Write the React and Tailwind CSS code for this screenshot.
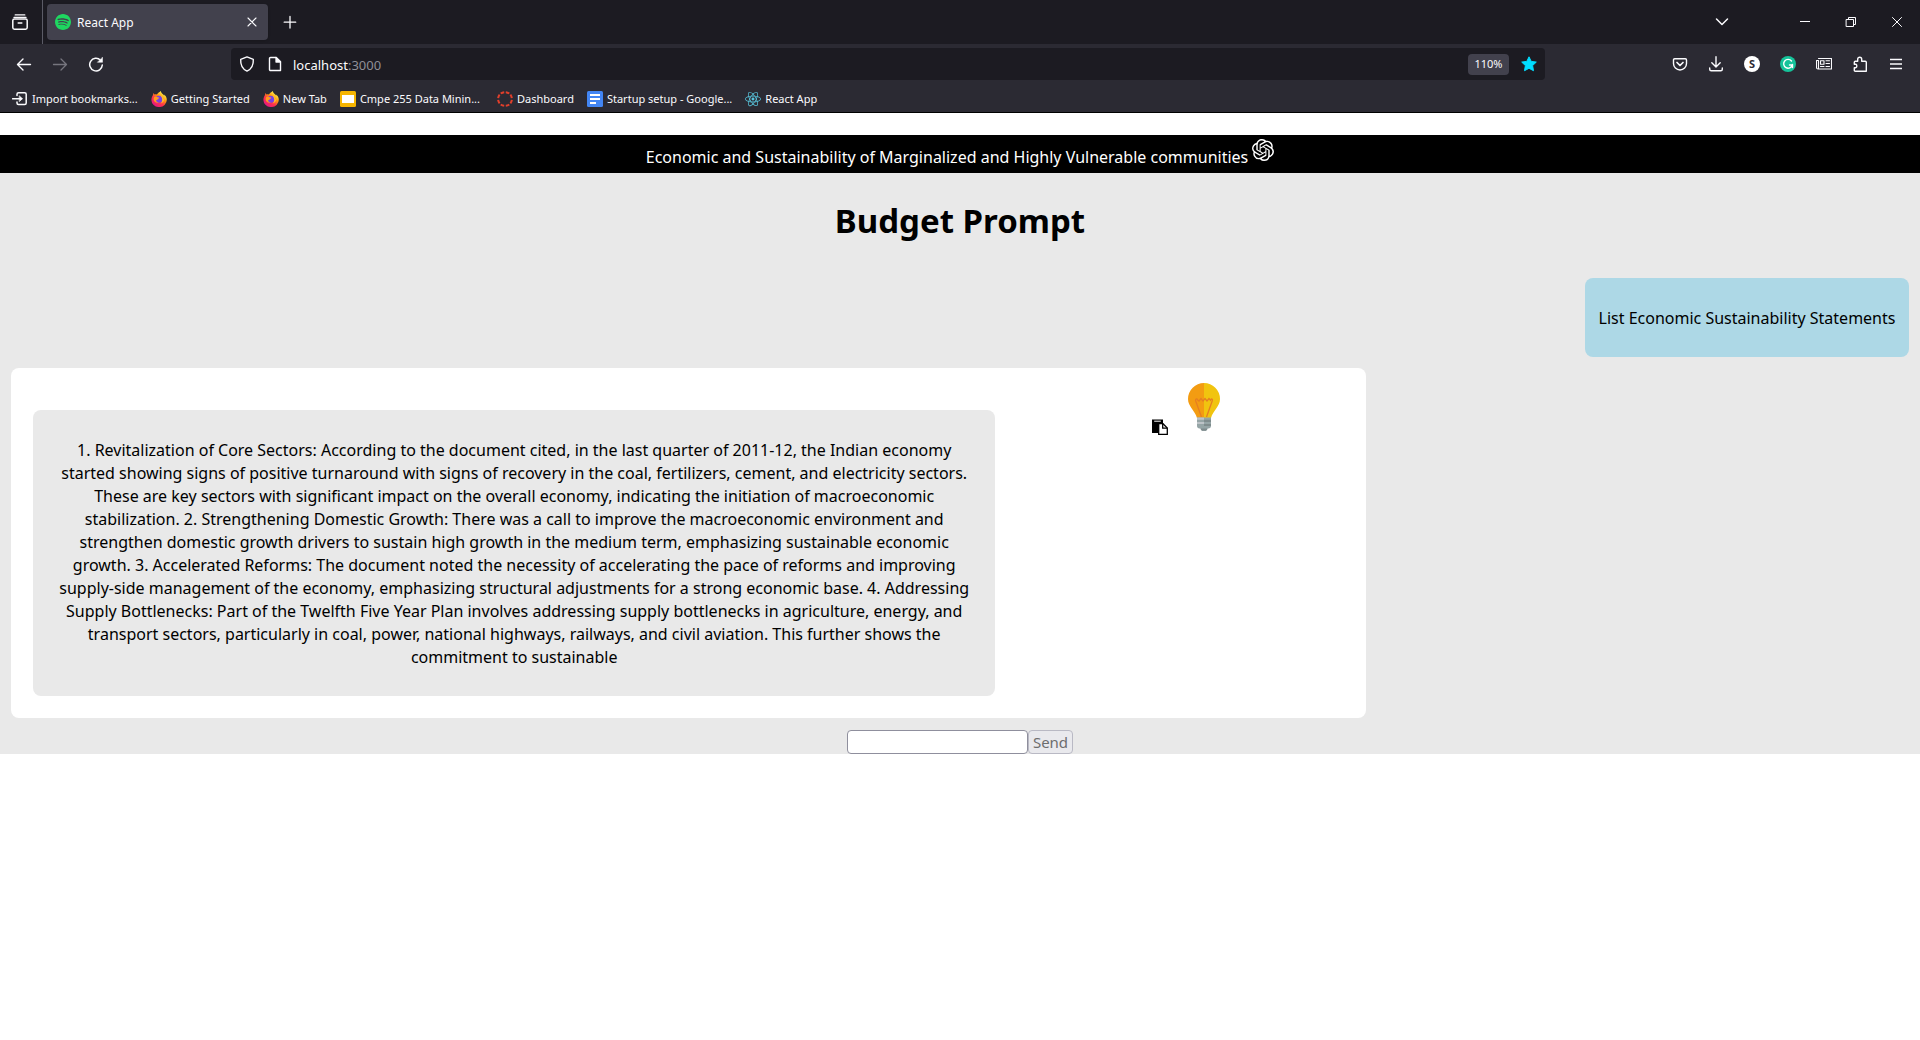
import React from "react";
import { SiOpenai, SiSpotify, SiReact } from "react-icons/si";

const stroke = {
  fill: "none",
  stroke: "currentColor",
  strokeWidth: 1.3,
  strokeLinecap: "round",
  strokeLinejoin: "round",
};

function Icon({ children, className = "size-4", ...rest }) {
  return (
    <svg viewBox="0 0 16 16" className={className} aria-hidden="true" {...stroke} {...rest}>
      {children}
    </svg>
  );
}

function IconButton({ label, className = "", children }) {
  return (
    <button type="button" aria-label={label} className={"flex h-9 w-9 shrink-0 items-center justify-center " + className}>
      {children}
    </button>
  );
}

function TabsBoxIcon() {
  return (
    <Icon>
      <path d="M3.2 0.9h9.6M2 3.4h12" />
      <rect x="0.8" y="5" width="14.4" height="10.2" rx="1.6" strokeWidth="1.5" />
      <path d="M6.2 9h3.6" strokeWidth="1.5" />
    </Icon>
  );
}

function Firefox({ id }) {
  return (
    <svg viewBox="0 0 16 16" className="size-4 shrink-0" aria-hidden="true">
      <defs>
        <linearGradient id={id} x1="0.85" y1="0.1" x2="0.2" y2="0.95">
          <stop offset="0.05" stopColor="#fff44f" />
          <stop offset="0.35" stopColor="#ff980e" />
          <stop offset="0.62" stopColor="#ff3647" />
          <stop offset="1" stopColor="#e31587" />
        </linearGradient>
      </defs>
      <path
        fill={`url(#${id})`}
        d="M9.9 0c.1 1.3.9 2.3 1.8 3.1.9.6 1.3 1.2 1.6 1.8 0-.5-.2-1-.4-1.4 1.9 1.200 2.900 3.300 2.900 5.300A7.700 7.200 0 0 1 .4 8.900c0-2.100.8-3.800 1.600-5L2.300 2l1.200 1.500c.9-.3 1.700-.2 2.300.1C6.500 2.400 8 1.200 9.900 0z"
      />
      <circle cx="7.900" cy="8.300" r="3.500" fill="#7542e5" />
      <path fill="#ff9a1f" d="M3 6.200c1.400-.9 2.700-.7 3.600.1.700.1 1.500.1 1.700.4-.2.800-1.500 1-1.800 1.700-.2.900-.9.800-1.500.6 0 1.500 1.300 2.500 2.800 2.500-2.500.8-5.200-.8-5.200-3.500z" />
      <path fill="#ffbd2f" d="M9.400 4.500c2 .6 3 2.200 2.800 4 .7-.4.900-1.200.8-2C14 9 12.300 12 9.300 12.400c2.200-.9 3.100-4.600.1-7.900z" />
    </svg>
  );
}

function CanvasRing() {
  return (
    <svg viewBox="0 0 16 16" className="size-4 shrink-0" aria-hidden="true">
      <circle cx="8" cy="8" r="6.900" fill="none" stroke="#e13f2b" strokeWidth="2" pathLength="80" strokeDasharray="7 3" strokeDashoffset="-1.500" />
    </svg>
  );
}

function Slides() {
  return (
    <svg viewBox="0 0 16 16" className="size-4 shrink-0" aria-hidden="true">
      <rect width="16" height="16" rx="1.500" fill="#f5b400" />
      <rect x="2" y="4" width="12" height="8" fill="#fff" />
    </svg>
  );
}

function Docs() {
  return (
    <svg viewBox="0 0 16 16" className="size-4 shrink-0" aria-hidden="true">
      <rect width="16" height="16" rx="1.500" fill="#4285f4" />
      <path d="M3 4h10M3 8h10M3 12h6" stroke="#fff" strokeWidth="2" />
    </svg>
  );
}

function ImportIcon() {
  return (
    <Icon className="h-4 w-4 shrink-0">
      <path d="M5 4.500V3.300c0-.9.600-1.500 1.500-1.500h6.200c.9 0 1.500.6 1.500 1.500v8.600c0 .9-.6 1.500-1.500 1.500H6.500c-.9 0-1.500-.6-1.500-1.500V11" strokeWidth="1.500" />
      <path d="M.6 7.700h9" strokeWidth="1.500" />
      <path d="M7.500 5l3 2.700-3 2.700z" fill="currentColor" strokeWidth="0.600" />
    </Icon>
  );
}

function Bulb() {
  return (
    <svg viewBox="0 0 32 48" className="h-12 w-8" aria-hidden="true">
      <path d="M16 0a16 16 0 0 0-16 16c0 7.500 7 11.500 9 19h7z" fill="#f39c12" />
      <path d="M16 0a16 16 0 0 1 16 16c0 7.500-7 11.500-9 19h-7z" fill="#f1c40f" />
      <path d="M13.500 34L7.500 17.500c0-2 1.500-2 2.200-.5l1.300 1 2-2.500 2 2.500 2-2.500 2 2.500 2-2.500 1.500 1.700c1-2.200 2.500-1.200 1.700.8L18.500 34" fill="none" stroke="#e67e22" strokeWidth="1.300" />
      <path d="M9 34.500h14V43c0 1.500-1 2.500-2.500 2.500h-1.300L18 47.800h-4l-1.200-2.300h-1.300C10 45.500 9 44.500 9 43z" fill="#95a5a6" />
      <path d="M9 34.500h7v2.300H9zM9 39h7v2H9z" fill="#bdc3c7" />
      <path d="M16 36.800h7V39h-7zM16 41h7v2h-7zM12 45.500h8l-1.800 2.300h-4.400z" fill="#7f8c8d" />
    </svg>
  );
}

function PasteIcon() {
  return (
    <svg viewBox="0 0 16 16" className="size-4" aria-hidden="true">
      <path d="M0 0.500h11V5H7v9H0z" fill="#000" />
      <path d="M2.200 2.200h6.600" stroke="#fff" />
      <path d="M6.700 4.700h4.300l4.300 4.300v6.300H6.700z" fill="#fff" stroke="#000" strokeWidth="1.300" />
      <path d="M10.700 4.700v4.500h4.500" fill="none" stroke="#000" strokeWidth="1.300" />
    </svg>
  );
}

function TabStrip() {
  return (
    <div className="flex h-11 items-center bg-[#1c1b22]">
      <div className="flex h-11 w-[43px] items-center justify-center border-r border-[#5b5b66] pr-0.5">
        <button type="button" aria-label="View recent browsing"><TabsBoxIcon /></button>
      </div>
      <div className="ml-1 flex h-9 w-[221px] items-center rounded bg-[#42414d] pr-2 pl-2 shadow">
        <SiSpotify className="size-4 text-[#1ed760]" />
        <span className="ml-1.5 flex-1 pt-0.5 text-xs">React App</span>
        <button type="button" aria-label="Close tab" className="flex size-4 items-center justify-center">
          <Icon strokeWidth="1.100"><path d="M4 4l8 8M12 4l-8 8" /></Icon>
        </button>
      </div>
      <button type="button" aria-label="New tab" className="ml-3.5 flex size-4 items-center justify-center">
        <Icon><path d="M8 2.500v11.500M2.200 8.200h11.500" /></Icon>
      </button>
      <div className="ml-auto flex items-center">
        <IconButton label="List all tabs" className="mr-[42px]">
          <Icon strokeWidth="1.500"><path d="M2.500 5L8 10.500 13.500 5" /></Icon>
        </IconButton>
        <button type="button" aria-label="Minimize" className="flex h-11 w-[46px] items-center justify-center">
          <Icon strokeWidth="1" strokeLinecap="butt"><path d="M3 7.500h10" /></Icon>
        </button>
        <button type="button" aria-label="Restore" className="flex h-11 w-[46px] items-center justify-center">
          <Icon strokeWidth="1"><path d="M3.500 5.500h7v7h-7zM5.500 5.500v-2h7v7h-2" /></Icon>
        </button>
        <button type="button" aria-label="Close" className="flex h-11 w-[46px] items-center justify-center">
          <Icon strokeWidth="1"><path d="M3.500 3.500l9 9M12.500 3.500l-9 9" /></Icon>
        </button>
      </div>
    </div>
  );
}

function Toolbar() {
  return (
    <div className="flex h-10 items-center px-1.5">
      <div className="flex w-[225px]">
        <IconButton label="Back"><Icon strokeWidth="1.400"><path d="M14.500 8.500H1.500M7 3L1.500 8.500 7 14" /></Icon></IconButton>
        <IconButton label="Forward" className="text-[#76757e]"><Icon><path d="M1.500 8.500h13M9 3l5.500 5.500L9 14" /></Icon></IconButton>
        <IconButton label="Reload">
          <Icon strokeWidth="1.500"><path d="M14.300 9A6.300 6.300 0 1 1 12.500 4.200" /><path d="M14.500 1.500v4.800H9.700z" fill="currentColor" strokeWidth="0.500" /></Icon>
        </IconButton>
      </div>
      <div className="flex h-8 w-[1314px] shrink items-center rounded bg-[#1c1b22] pr-2 pl-2">
        <Icon><path d="M8 .9l6.300 2.500c.3 5-1.500 9.600-6.300 11.700C3.200 13 1.400 8.400 1.700 3.400z" strokeWidth="1.400" /></Icon>
        <Icon className="ml-3 size-4"><path d="M3.500 1.500h5.700l4.300 4.300v8.700h-10a1 1 0 0 1-1-1v-11a1 1 0 0 1 1-1z" strokeWidth="1.400" /><path d="M9 1.500v4.500h4.500z" fill="currentColor" /></Icon>
        <div className="relative ml-2.5 h-6 flex-1 text-[13px] leading-[26px]">
          <span aria-hidden="true">localhost<span className="text-[#8f8f96]">:3000</span></span>
          <input aria-label="Address" defaultValue="localhost:3000" className="absolute inset-0 w-full bg-transparent text-transparent outline-none" />
        </div>
        <button type="button" className="h-[21px] w-[41px] rounded-sm bg-[#42414d] text-[11px]">110%</button>
        <button type="button" aria-label="Edit bookmark" className="ml-3">
          <svg viewBox="0 0 16 16" className="size-4" aria-hidden="true"><path fill="#00ddff" stroke="#00ddff" strokeLinejoin="round" d="M8 .8l2.200 4.600 5.100.7-3.700 3.500.9 5.100L8 12.300l-4.500 2.400.9-5.100L.7 6.100l5.100-.7z" /></svg>
        </button>
      </div>
      <div className="ml-auto flex">
        <IconButton label="Save to Pocket"><Icon strokeWidth="1.400"><path d="M2.700 2.700h10.600a1.200 1.200 0 0 1 1.200 1.200V7.500a6.500 6.500 0 0 1-13 0V3.900a1.200 1.200 0 0 1 1.200-1.200z" /><path d="M5 6.500l3 3 3-3" strokeWidth="1.700" /></Icon></IconButton>
        <IconButton label="Downloads"><Icon strokeWidth="1.400"><path d="M8 .8v10M3.800 6.700L8 10.900l4.200-4.200M1.700 12v1.200c0 1 .6 1.500 1.500 1.500h9.600c.9 0 1.500-.5 1.500-1.500V12" /></Icon></IconButton>
        <IconButton label="Account"><span className="flex size-4 items-center justify-center rounded-full bg-white text-[11px] font-bold text-[#2b2a33]">S</span></IconButton>
        <IconButton label="Grammar checker">
          <Icon><circle cx="8" cy="8" r="8" fill="#15c39a" stroke="none" /><path d="M11.500 5A4.400 4.400 0 1 0 12.300 9H9.500M12.500 8.500v3" stroke="#fff" strokeWidth="1.400" /></Icon>
        </IconButton>
        <IconButton label="Reader">
          <Icon strokeWidth="1.100"><path d="M2.500 2.500h13v10.500H2a1.500 1.500 0 0 1-1.500-1.500V4.500h2v8" /><rect x="4.500" y="4.800" width="3.500" height="3.500" /><path d="M10 4.800h3.500M10 7.500h3.500M4.500 10.500H8M10 10.500h3.500" /></Icon>
        </IconButton>
        <IconButton label="Extensions">
          <Icon strokeWidth="1.400"><path d="M5.700 5.200V3.200a2 2 0 0 1 4 0v2h3.600c.6 0 1 .4 1 1v9H3.300c-.6 0-1-.4-1-1v-2.500h1.500a2 2 0 0 0 0-3.500H2.300V6.200c0-.6.400-1 1-1z" /></Icon>
        </IconButton>
        <IconButton label="Menu"><Icon strokeLinecap="butt"><path d="M2 3.500h12M2 8h12M2 12.500h12" strokeWidth="1.400" /></Icon></IconButton>
      </div>
    </div>
  );
}

function Bookmark({ icon, className = "", children }) {
  return (
    <a href="#" className={"flex shrink-0 items-center gap-1 whitespace-nowrap " + className}>
      {icon}
      <span>{children}</span>
    </a>
  );
}

function Bookmarks() {
  return (
    <nav aria-label="Bookmarks" className="flex h-[29px] items-center gap-[13px] border-b border-black px-3 pt-0.5 text-[11px]">
      <Bookmark icon={<ImportIcon />}>Import bookmarks...</Bookmark>
      <Bookmark icon={<Firefox id="ff1" />}>Getting Started</Bookmark>
      <Bookmark icon={<Firefox id="ff2" />}>New Tab</Bookmark>
      <Bookmark icon={<Slides />}>Cmpe 255 Data Minin...</Bookmark>
      <Bookmark icon={<CanvasRing />} className="ml-1">Dashboard</Bookmark>
      <Bookmark icon={<Docs />}>Startup setup - Google...</Bookmark>
      <Bookmark icon={<SiReact className="size-4 text-[#58c4dc]" />}>React App</Bookmark>
    </nav>
  );
}

const answer = [
  "1. Revitalization of Core Sectors: According to the document cited, in the last quarter of 2011-12, the Indian economy",
  "started showing signs of positive turnaround with signs of recovery in the coal, fertilizers, cement, and electricity sectors.",
  "These are key sectors with significant impact on the overall economy, indicating the initiation of macroeconomic",
  "stabilization. 2. Strengthening Domestic Growth: There was a call to improve the macroeconomic environment and",
  "strengthen domestic growth drivers to sustain high growth in the medium term, emphasizing sustainable economic",
  "growth. 3. Accelerated Reforms: The document noted the necessity of accelerating the pace of reforms and improving",
  "supply-side management of the economy, emphasizing structural adjustments for a strong economic base. 4. Addressing",
  "Supply Bottlenecks: Part of the Twelfth Five Year Plan involves addressing supply bottlenecks in agriculture, energy, and",
  "transport sectors, particularly in coal, power, national highways, railways, and civil aviation. This further shows the",
  "commitment to sustainable",
];

export default function App() {
  return (
    <div className="min-h-screen bg-white font-['Noto_Sans','Open_Sans',sans-serif]">
      <header className="bg-[#2b2a33] text-[#fbfbfe]">
        <TabStrip />
        <Toolbar />
        <Bookmarks />
      </header>
      <main className="mt-[22px] bg-[#e9e9e9] text-center text-[16px] leading-[23px] text-black">
        <div className="flex h-[38px] items-start justify-center gap-1 bg-black pt-1 text-white">
          <span className="pt-[7px]">Economic and Sustainability of Marginalized and Highly Vulnerable communities</span>
          <SiOpenai className="size-[22px]" />
        </div>
        <h1 className="pt-6 text-[33px] leading-[47px] font-bold">Budget Prompt</h1>
        <section className="px-[11px] pt-[34px]">
          <div className="ml-auto w-fit min-w-[324px] rounded-lg bg-[#add8e6] px-[11px] pt-[29px] pb-[27px]">
            <p>List Economic Sustainability Statements</p>
          </div>
          <div className="mt-[11px] flex w-[71.4%] items-start rounded-lg bg-white p-[22px] pt-0">
            <div className="mt-[42px] w-[73.4%] rounded-lg bg-[#e9e9e9] pt-[29px] pb-[27px]">
              <p>
                {answer.map((line) => (
                  <span key={line} className="block whitespace-nowrap">{line}</span>
                ))}
              </p>
            </div>
            <div className="flex flex-1 items-start justify-center pt-[15px] pl-8">
              <button type="button" aria-label="Copy answer" className="mt-9 mr-5"><PasteIcon /></button>
              <Bulb />
            </div>
          </div>
        </section>
        <form className="flex justify-center pt-3" onSubmit={(e) => e.preventDefault()}>
          <input aria-label="Prompt" className="h-6 w-[181px] rounded-sm border border-[#8f8f9d] bg-white px-1" />
          <button type="submit" disabled className="h-6 w-[45px] rounded border border-[#b9b9c4] bg-[#e9e9ed] text-[15px] leading-5 text-[#6d6d6d]">Send</button>
        </form>
      </main>
    </div>
  );
}
